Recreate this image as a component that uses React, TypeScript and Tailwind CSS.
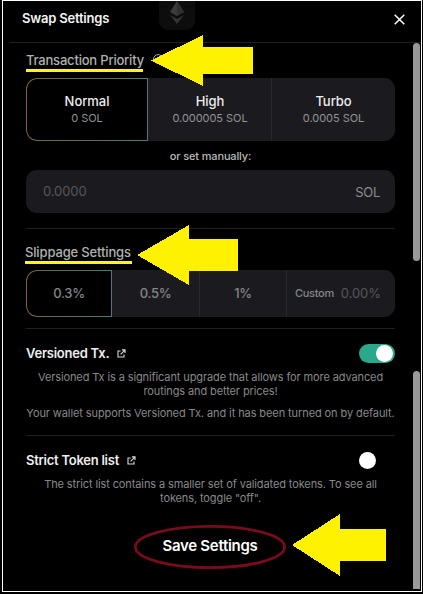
import type { ReactNode } from 'react';

function Divider() {
  return <div className="h-px shrink-0 bg-[#202020]" />;
}

function LinkIcon() {
  return (
    <svg className="h-[9px] w-[9px]" viewBox="0 0 10 10" fill="none" stroke="#dcdcdc" strokeWidth="1.2">
      <path d="M4 2.2H1.1v6.7h6.7V6M5.5 1h3.4v3.4M8.7 1.2 4 5.9" />
    </svg>
  );
}

function Arrow({ className, points, box }: { className: string; points: string; box: string }) {
  return (
    <svg className={`absolute ${className}`} viewBox={box} shapeRendering="crispEdges">
      <polygon points={points} fill="#fff200" />
    </svg>
  );
}

function GradientCell({ children, className }: { children: ReactNode; className: string }) {
  return (
    <div className={`shrink-0 rounded-l-[11px] bg-linear-to-r from-[#80662a] via-[#5f6a55] to-[#477c85] p-px ${className}`}>
      <div className="flex h-full flex-col items-center justify-center rounded-l-[10px] bg-black">{children}</div>
    </div>
  );
}

function Priority({ name, fee }: { name: string; fee: string }) {
  return (
    <div className="flex flex-col items-center">
      <span className="text-[13px] leading-[18px] font-medium tracking-[-0.05px] text-[#ededed]">{name}</span>
      <span className="text-[11px] leading-[17px] tracking-[-0.05px] text-[#939395]">{fee}</span>
    </div>
  );
}

export default function App() {
  return (
    <div className="h-[594px] w-[423px] overflow-hidden bg-black pl-[2px] font-['Inter','Liberation_Sans',sans-serif]">
      <div className="relative flex h-[592px] w-[420px] flex-col border border-white bg-black">
        <header className="flex h-[41px] shrink-0 items-center justify-between pr-[16px] pb-[5px] pl-[19px]">
          <h1 className="text-[13px] font-semibold tracking-[-0.2px] text-[#f4f4f4]">Swap Settings</h1>
          <svg className="h-[11px] w-[11px]" viewBox="0 0 11 11" stroke="white" strokeWidth="1.5">
            <path d="m.7.7 9.6 9.6M10.3.7.7 10.3" />
          </svg>
        </header>
        <div className="ml-[6px]"><Divider /></div>

        <div className="flex min-h-0 flex-1">
          <main className="flex w-[410px] shrink-0 flex-col pr-[18px] pl-[23px]">
            <div className="flex h-[35px] items-start gap-[10px] pt-[7px]">
              <h2 className="h-[22px] w-[117px] border-b-[3px] border-[#fff22d] pt-px text-[13px] leading-[18px] font-medium tracking-[-0.2px] whitespace-nowrap text-[#b1b1b1]">Transaction Priority</h2>
              <svg className="mt-[4px] h-[10px] w-[10px]" viewBox="0 0 10 10" fill="none" stroke="#aaa"><circle cx="5" cy="5" r="4.4" /></svg>
            </div>
            <div className="flex h-[63px] shrink-0 overflow-hidden rounded-[11px] bg-[#1b1b1f]">
              <GradientCell className="w-[122px]"><Priority name="Normal" fee="0 SOL" /></GradientCell>
              <div className="flex w-[124px] items-center justify-center border-r border-[#292a2e] pl-px"><Priority name="High" fee="0.000005 SOL" /></div>
              <div className="flex flex-1 items-center justify-center"><Priority name="Turbo" fee="0.0005 SOL" /></div>
            </div>
            <div className="flex h-[29px] shrink-0 items-center justify-center pt-px text-[11px] font-medium tracking-[-0.15px] text-[#b9b9b9]">or set manually:</div>
            <div className="flex h-[43px] shrink-0 items-center justify-between rounded-[11px] bg-[#1b1b1f] pr-[15px] pl-[17px] text-[13px]">
              <span className="tracking-[-0.1px] text-[#55565a]">0.0000</span><span className="pt-[2px] tracking-[-0.3px] text-[#8b8b8d]">SOL</span>
            </div>
            <div className="h-[15px] shrink-0" />
            <Divider />
            <div className="h-[41px] shrink-0 pt-[13px]">
              <h2 className="-ml-px h-[22px] w-[107px] border-b-[3px] border-[#fff22d] pt-px text-[13px] leading-[18px] font-medium tracking-[-0.15px] whitespace-nowrap text-[#b1b1b1]">Slippage Settings</h2>
            </div>
            <div className="flex h-[47px] shrink-0 overflow-hidden rounded-[11px] bg-[#1b1b1f] text-[13px] font-medium tracking-[-0.3px] text-[#858587]">
              <GradientCell className="w-[86px]">0.3%</GradientCell>
              <div className="flex w-[88px] items-center justify-center border-r border-[#292a2e]">0.5%</div>
              <div className="flex w-[87px] items-center justify-center border-r border-[#292a2e]">1%</div>
              <div className="flex flex-1 items-center gap-[7px] pl-[8px]">
                <span className="pb-px text-[11px]">Custom</span><span className="font-normal tracking-[-0.1px] text-[#55565a]">0.00%</span>
              </div>
            </div>
            <div className="h-[11px] shrink-0" />
            <Divider />

            <section className="h-[106px] shrink-0 pt-[15px]">
              <div className="flex h-[19px] items-center">
                <h3 className="mr-[8px] text-[13px] font-semibold tracking-[-0.25px] text-[#eeeeee]">Versioned Tx.</h3><LinkIcon />
                <div className="ml-auto flex h-[19px] w-[36px] items-center justify-end rounded-full bg-[#29a98b] pr-[2px]"><span className="h-[17px] w-[17px] rounded-full bg-white" /></div>
              </div>
              <p className="mt-[7px] text-center text-[11px] leading-[14px] tracking-[-0.11px] whitespace-nowrap text-[#88888a]">Versioned Tx is a significant upgrade that allows for more advanced<br />routings and better prices!</p>
              <p className="mt-[8px] text-center text-[11px] leading-[14px] tracking-[-0.09px] whitespace-nowrap text-[#88888a]">Your wallet supports Versioned Tx. and it has been turned on by default.</p>
            </section>
            <Divider />
            <section className="h-[89px] shrink-0 pt-[15px]">
              <div className="flex h-[19px] items-center">
                <h3 className="mr-[8px] text-[13px] font-semibold tracking-[-0.25px] text-[#eeeeee]">Strict Token list</h3><LinkIcon />
                <div className="ml-auto flex h-[19px] w-[36px] items-center"><span className="h-[17px] w-[17px] rounded-full bg-white" /></div>
              </div>
              <p className="mt-[7px] text-center text-[11px] leading-[14px] tracking-[-0.11px] whitespace-nowrap text-[#88888a]">The strict list contains a smaller set of validated tokens. To see all<br />tokens, toggle &quot;off&quot;.</p>
            </section>
            <button className="relative ml-[108px] h-[44px] w-[152px] shrink-0 pb-px text-[15px] font-semibold tracking-[-0.3px] text-white">
              Save Settings
              <svg className="absolute inset-0 h-[44px] w-[152px]" viewBox="0 0 152 44" fill="none"><ellipse cx="76" cy="22" rx="74.6" ry="20.6" stroke="#780c1e" strokeWidth="2.8" /></svg>
            </button>
          </main>
          <div className="flex w-[7px] shrink-0 flex-col">
            <div className="h-[218px] rounded-full bg-[#999999]" />
            <div className="mt-[110px] h-[218px] rounded-t-full rounded-br-[7px] bg-[#999999]" />
          </div>
        </div>

        <div className="absolute top-0 left-[156px] flex h-[29px] w-[36px] justify-center rounded-b-[9px] bg-[#0d0d0d]">
          <svg className="h-[24px] w-[16px]" viewBox="0 0 16 24"><path d="M8 0 1 11l7 4 7-4Z" fill="#3c3c3c" /><path d="M8 0v15l7-4Z" fill="#303030" /><path d="m1 14 7 9 7-9-7 4Z" fill="#353535" /></svg>
        </div>
        <Arrow className="top-[34px] left-[148px] h-[51px] w-[102px]" box="0 0 102 51" points="0,25.5 52,0 52,12 102,12 102,39 52,39 52,51" />
        <Arrow className="top-[224px] left-[134px] h-[60px] w-[101px]" box="0 0 101 60" points="0,30 52,0 52,14 101,14 101,46 52,46 52,60" />
        <Arrow className="top-[513px] left-[289px] h-[62px] w-[94px]" box="0 0 94 62" points="0,31 48,0 48,15 94,15 94,47 48,47 48,62" />
      </div>
    </div>
  );
}
